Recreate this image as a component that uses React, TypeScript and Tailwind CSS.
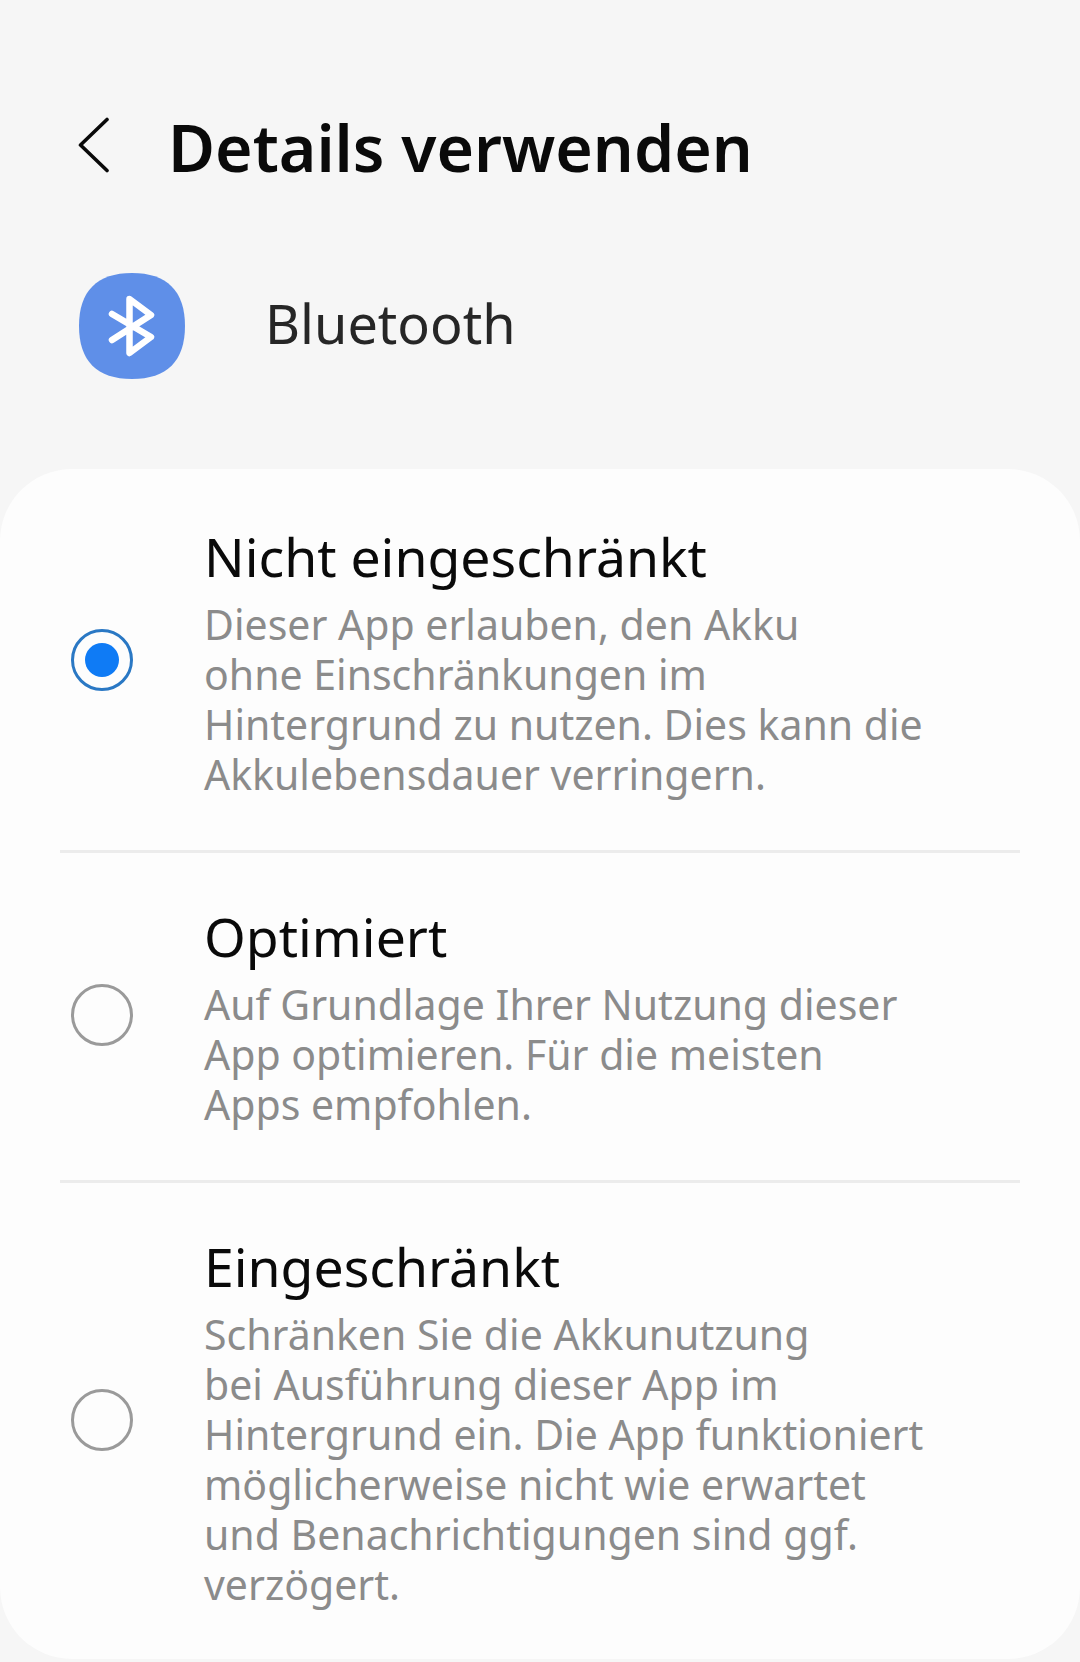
const font = { fontFamily: '"Noto Sans", sans-serif' };

function Radio({ on }: { on?: boolean }) {
  return on ? (
    <div className="w-[62px] h-[62px] rounded-full border-[3px] border-[#2a78c4] flex items-center justify-center shrink-0">
      <div className="w-[34px] h-[34px] rounded-full bg-[#0f7bf5]" />
    </div>
  ) : (
    <div className="w-[62px] h-[62px] rounded-full border-[3px] border-[#9a9a9a] shrink-0" />
  );
}

function Option({ title, lines, on, className, radioClass }: { title: string; lines: string[]; on?: boolean; className: string; radioClass?: string }) {
  return (
    <div className="flex items-stretch">
      <div className={`w-[204px] pl-[71px] flex items-center shrink-0 ${radioClass ?? ""}`}>
        <Radio on={on} />
      </div>
      <div className={className}>
        <div className="text-[53.5px] leading-[66px] text-[#0a0a0a] whitespace-nowrap">{title}</div>
        <div className="text-[41px] leading-[50px] text-[#8b8b8b] mt-[9px] whitespace-nowrap">
          {lines.map((l) => (
            <div key={l}>{l}</div>
          ))}
        </div>
      </div>
    </div>
  );
}

export default function App() {
  return (
    <div style={font} className="w-[1080px] h-[1662px] bg-[#f6f6f6] overflow-hidden">
      <div className="flex items-center pt-[107px] pl-[78px]">
        <svg width="32" height="56" viewBox="0 0 32 56" fill="none" className="shrink-0 mb-[4px]">
          <path d="M29 2.5 L2.5 28 L29 53.5" stroke="#0a0a0a" strokeWidth="3.6" strokeLinecap="round" strokeLinejoin="round" />
        </svg>
        <div className="ml-[58px] text-[64.3px] leading-[80px] font-semibold text-[#0a0a0a] whitespace-nowrap">Details verwenden</div>
      </div>
      <div className="flex items-center pl-[79px] mt-[86px] h-[106px]">
        <svg width="106" height="106" viewBox="0 0 106 106" className="shrink-0">
          <path d="M53 0 C88 0 106 18 106 53 C106 88 88 106 53 106 C18 106 0 88 0 53 C0 18 18 0 53 0Z" fill="#5f8fe8" />
          <path d="M33 41 L72 64 L50.5 80 V26 L72 42 L33 67" fill="none" stroke="#fff" strokeWidth="6.5" strokeLinecap="round" strokeLinejoin="round" />
        </svg>
        <div className="ml-[80px] text-[54px] leading-[70px] text-[#262626] -translate-y-[3px]">Bluetooth</div>
      </div>
      <div className="mt-[90px] h-[1190px] rounded-[72px] bg-[#fdfdfd]">
        <Option
          on
          title="Nicht eingeschränkt"
          lines={["Dieser App erlauben, den Akku", "ohne Einschränkungen im", "Hintergrund zu nutzen. Dies kann die", "Akkulebensdauer verringern."]}
          className="h-[381px] pt-[55px]"
        />
        <div className="mx-[60px] h-[3px] bg-[#ececec]" />
        <Option
          title="Optimiert"
          lines={["Auf Grundlage Ihrer Nutzung dieser", "App optimieren. Für die meisten", "Apps empfohlen."]}
          className="h-[327px] pt-[51px]"
          radioClass="pb-[4px]"
        />
        <div className="mx-[60px] h-[3px] bg-[#ececec]" />
        <Option
          title="Eingeschränkt"
          lines={["Schränken Sie die Akkunutzung", "bei Ausführung dieser App im", "Hintergrund ein. Die App funktioniert", "möglicherweise nicht wie erwartet", "und Benachrichtigungen sind ggf.", "verzögert."]}
          className="h-[476px] pt-[51px]"
          radioClass="pb-[2px]"
        />
      </div>
    </div>
  );
}
